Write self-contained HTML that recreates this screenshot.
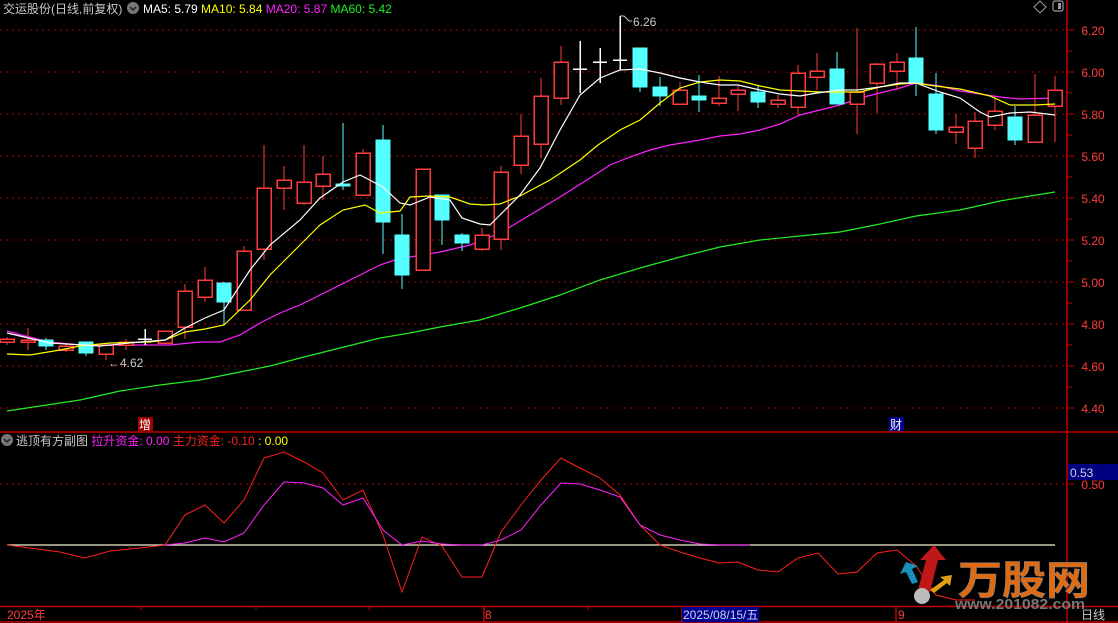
<!DOCTYPE html>
<html><head><meta charset="utf-8"><style>
html,body{margin:0;padding:0;background:#000;width:1118px;height:623px;overflow:hidden}
svg{display:block}
text{font-family:"Liberation Sans","Noto Sans CJK SC",sans-serif}
.r{fill:#000;stroke:#ff3c3c;stroke-width:1.5}
.rw{stroke:#ff3c3c;stroke-width:1.2}
.c{fill:#54ffff;stroke:#54ffff}
.cw{stroke:#54ffff;stroke-width:1.2}
.w{stroke:#fff;stroke-width:1.5}
.g{stroke:#a00;stroke-dasharray:2 4;stroke-width:1}
</style></head><body>
<svg width="1118" height="623" viewBox="0 0 1118 623" xmlns="http://www.w3.org/2000/svg">
<g class="g">
<line x1="0" y1="30" x2="1067" y2="30"/><line x1="0" y1="72" x2="1067" y2="72"/><line x1="0" y1="114" x2="1067" y2="114"/><line x1="0" y1="156" x2="1067" y2="156"/><line x1="0" y1="198" x2="1067" y2="198"/><line x1="0" y1="240" x2="1067" y2="240"/><line x1="0" y1="282" x2="1067" y2="282"/><line x1="0" y1="324" x2="1067" y2="324"/><line x1="0" y1="366" x2="1067" y2="366"/><line x1="0" y1="408" x2="1067" y2="408"/><line x1="0" y1="484" x2="1067" y2="484"/>
</g>
<g stroke="#c00000" stroke-width="1.5" fill="none">
<line x1="1067" y1="0" x2="1067" y2="623"/>
<line x1="0" y1="432" x2="1118" y2="432"/>
<line x1="0" y1="606.5" x2="1118" y2="606.5"/>
<line x1="0" y1="622" x2="1118" y2="622"/>
<line x1="484" y1="606" x2="484" y2="622"/>
<line x1="682" y1="606" x2="682" y2="622"/>
<line x1="896" y1="606" x2="896" y2="622"/>
</g>
<g stroke="#c00000" stroke-width="1">
<line x1="1067" y1="51" x2="1072" y2="51"/><line x1="1067" y1="93" x2="1072" y2="93"/><line x1="1067" y1="135" x2="1072" y2="135"/><line x1="1067" y1="177" x2="1072" y2="177"/><line x1="1067" y1="219" x2="1072" y2="219"/><line x1="1067" y1="261" x2="1072" y2="261"/><line x1="1067" y1="303" x2="1072" y2="303"/><line x1="1067" y1="345" x2="1072" y2="345"/><line x1="1067" y1="387" x2="1072" y2="387"/>
<line x1="1067" y1="30" x2="1074" y2="30"/><line x1="1067" y1="72" x2="1074" y2="72"/><line x1="1067" y1="114" x2="1074" y2="114"/><line x1="1067" y1="156" x2="1074" y2="156"/><line x1="1067" y1="198" x2="1074" y2="198"/><line x1="1067" y1="240" x2="1074" y2="240"/><line x1="1067" y1="282" x2="1074" y2="282"/><line x1="1067" y1="324" x2="1074" y2="324"/><line x1="1067" y1="366" x2="1074" y2="366"/><line x1="1067" y1="408" x2="1074" y2="408"/><line x1="1067" y1="484" x2="1074" y2="484"/>
<line x1="141" y1="606" x2="141" y2="610"/><line x1="256" y1="606" x2="256" y2="610"/><line x1="369" y1="606" x2="369" y2="610"/><line x1="588" y1="606" x2="588" y2="610"/>
</g>
<g fill="#ff3c3c" font-size="12" text-anchor="middle">
<text x="1093" y="35">6.20</text><text x="1093" y="77">6.00</text><text x="1093" y="119">5.80</text><text x="1093" y="161">5.60</text><text x="1093" y="203">5.40</text><text x="1093" y="245">5.20</text><text x="1093" y="287">5.00</text><text x="1093" y="329">4.80</text><text x="1093" y="371">4.60</text><text x="1093" y="413">4.40</text><text x="1093" y="489">0.50</text>
</g>
<rect x="1068" y="464" width="50" height="16" fill="#000080"/>
<text x="1070" y="477" fill="#d0d0e0" font-size="12">0.53</text>

<polyline fill="none" stroke="#22ee22" stroke-width="1.2" points="7,411 40,406 80,400 120,391 160,385 200,380 240,372 270,366 300,358 340,348 380,338 410,333 440,327 480,320 520,308 560,295 600,280 640,268 680,257 720,247 760,240 800,236 840,232 880,224 916,216 960,210 1000,201 1030,196 1055,192"/>
<polyline fill="none" stroke="#ff22ff" stroke-width="1.2" points="7,331 25,336 50,342 80,345 110,345 150,345 170,345 200,342 220,342 240,335 260,323 280,313 300,305 320,295 340,285 360,275 380,265 395,260 410,257 440,252 470,245 500,233 530,215 560,197 590,178 610,165 630,157 650,150 670,145 700,140 720,136 740,134 760,130 780,124 800,115 820,110 840,105 860,98 880,93 900,88 916,83 940,86 960,91 980,94 1000,97 1020,99 1055,98"/>

<g shape-rendering="crispEdges">
<line class="rw" x1="7" y1="337" x2="7" y2="345"/><rect class="r" x="0" y="339" width="14" height="3"/>
<line class="rw" x1="28" y1="328" x2="28" y2="350"/><rect class="r" x="21" y="340" width="14" height="2"/>
<line class="cw" x1="46" y1="338" x2="46" y2="350"/><rect class="c" x="39" y="340" width="14" height="6"/>
<line class="rw" x1="66" y1="343" x2="66" y2="352"/><rect class="r" x="59" y="346" width="14" height="4"/>
<line class="cw" x1="86" y1="342" x2="86" y2="356"/><rect class="c" x="79" y="342" width="14" height="11"/>
<line class="rw" x1="106" y1="343" x2="106" y2="360"/><rect class="r" x="99" y="345" width="14" height="9"/>
<line class="rw" x1="126" y1="339" x2="126" y2="350"/><rect class="r" x="119" y="342" width="14" height="3"/>
<line class="w" x1="145" y1="329" x2="145" y2="345"/><line class="w" x1="138" y1="339" x2="152" y2="339"/>
<line class="rw" x1="165" y1="331" x2="165" y2="343"/><rect class="r" x="158" y="331" width="14" height="12"/>
<line class="rw" x1="185" y1="284" x2="185" y2="339"/><rect class="r" x="178" y="291" width="14" height="36"/>
<line class="rw" x1="205" y1="267" x2="205" y2="302"/><rect class="r" x="198" y="280" width="14" height="17"/>
<line class="cw" x1="224" y1="282" x2="224" y2="325"/><rect class="c" x="217" y="283" width="14" height="19"/>
<line class="rw" x1="244" y1="246" x2="244" y2="310"/><rect class="r" x="237" y="251" width="14" height="59"/>
<line class="rw" x1="264" y1="145" x2="264" y2="260"/><rect class="r" x="257" y="188" width="14" height="61"/>
<line class="rw" x1="284" y1="166" x2="284" y2="210"/><rect class="r" x="277" y="180" width="14" height="8"/>
<line class="rw" x1="304" y1="145" x2="304" y2="205"/><rect class="r" x="297" y="182" width="14" height="21"/>
<line class="rw" x1="323" y1="156" x2="323" y2="200"/><rect class="r" x="316" y="174" width="14" height="12"/>
<line class="cw" x1="343" y1="123" x2="343" y2="190"/><rect class="c" x="336" y="184" width="14" height="2"/>
<line class="rw" x1="363" y1="149" x2="363" y2="195"/><rect class="r" x="356" y="153" width="14" height="42"/>
<line class="cw" x1="383" y1="125" x2="383" y2="254"/><rect class="c" x="376" y="140" width="14" height="82"/>
<line class="cw" x1="402" y1="214" x2="402" y2="289"/><rect class="c" x="395" y="235" width="14" height="40"/>
<line class="rw" x1="423" y1="169" x2="423" y2="270"/><rect class="r" x="416" y="169" width="14" height="101"/>
<line class="cw" x1="442" y1="195" x2="442" y2="245"/><rect class="c" x="435" y="195" width="14" height="25"/>
<line class="cw" x1="462" y1="233" x2="462" y2="251"/><rect class="c" x="455" y="235" width="14" height="8"/>
<line class="rw" x1="482" y1="228" x2="482" y2="251"/><rect class="r" x="475" y="235" width="14" height="14"/>
<line class="rw" x1="501" y1="166" x2="501" y2="250"/><rect class="r" x="494" y="172" width="14" height="67"/>
<line class="rw" x1="521" y1="114" x2="521" y2="174"/><rect class="r" x="514" y="136" width="14" height="29"/>
<line class="rw" x1="541" y1="78" x2="541" y2="158"/><rect class="r" x="534" y="96" width="14" height="48"/>
<line class="rw" x1="561" y1="46" x2="561" y2="105"/><rect class="r" x="554" y="62" width="14" height="36"/>
<line class="w" x1="580" y1="41" x2="580" y2="93"/><line class="w" x1="573" y1="69" x2="587" y2="69"/>
<line class="w" x1="600" y1="48" x2="600" y2="83"/><line class="w" x1="593" y1="62" x2="607" y2="62"/>
<line class="w" x1="620" y1="16" x2="620" y2="70"/><line class="w" x1="613" y1="60" x2="627" y2="60"/>
<line class="cw" x1="640" y1="48" x2="640" y2="92"/><rect class="c" x="633" y="48" width="14" height="39"/>
<line class="cw" x1="660" y1="77" x2="660" y2="106"/><rect class="c" x="653" y="87" width="14" height="9"/>
<line class="rw" x1="680" y1="82" x2="680" y2="104"/><rect class="r" x="673" y="90" width="14" height="14"/>
<line class="cw" x1="699" y1="75" x2="699" y2="112"/><rect class="c" x="692" y="96" width="14" height="4"/>
<line class="rw" x1="719" y1="76" x2="719" y2="106"/><rect class="r" x="712" y="98" width="14" height="5"/>
<line class="rw" x1="738" y1="86" x2="738" y2="111"/><rect class="r" x="731" y="90" width="14" height="4"/>
<line class="cw" x1="758" y1="86" x2="758" y2="108"/><rect class="c" x="751" y="92" width="14" height="10"/>
<line class="rw" x1="778" y1="95" x2="778" y2="108"/><rect class="r" x="771" y="100" width="14" height="4"/>
<line class="rw" x1="798" y1="65" x2="798" y2="115"/><rect class="r" x="791" y="73" width="14" height="34"/>
<line class="rw" x1="817" y1="53" x2="817" y2="90"/><rect class="r" x="810" y="71" width="14" height="6"/>
<line class="cw" x1="837" y1="52" x2="837" y2="104"/><rect class="c" x="830" y="69" width="14" height="35"/>
<line class="rw" x1="857" y1="28" x2="857" y2="134"/><rect class="r" x="850" y="92" width="14" height="12"/>
<line class="rw" x1="877" y1="63" x2="877" y2="113"/><rect class="r" x="870" y="64" width="14" height="19"/>
<line class="rw" x1="897" y1="53" x2="897" y2="90"/><rect class="r" x="890" y="62" width="14" height="9"/>
<line class="cw" x1="916" y1="27" x2="916" y2="96"/><rect class="c" x="909" y="58" width="14" height="25"/>
<line class="cw" x1="936" y1="73" x2="936" y2="134"/><rect class="c" x="929" y="94" width="14" height="36"/>
<line class="rw" x1="956" y1="114" x2="956" y2="144"/><rect class="r" x="949" y="127" width="14" height="5"/>
<line class="rw" x1="975" y1="112" x2="975" y2="158"/><rect class="r" x="968" y="121" width="14" height="27"/>
<line class="rw" x1="995" y1="96" x2="995" y2="130"/><rect class="r" x="988" y="111" width="14" height="14"/>
<line class="cw" x1="1015" y1="106" x2="1015" y2="145"/><rect class="c" x="1008" y="117" width="14" height="23"/>
<line class="rw" x1="1035" y1="74" x2="1035" y2="142"/><rect class="r" x="1028" y="115" width="14" height="27"/>
<line class="rw" x1="1055" y1="76" x2="1055" y2="142"/><rect class="r" x="1048" y="90" width="14" height="16"/>
</g>
<polyline fill="none" stroke="#ffff00" stroke-width="1.2" points="7,354 30,355 60,350 80,346 110,343 150,342 165,340 185,332 205,329 224,325 250,300 270,275 290,255 305,240 320,225 343,210 365,205 380,213 400,211 410,197 430,196 450,197 470,204 485,205 500,204 520,196 550,180 580,160 598,145 620,130 640,120 660,103 680,88 700,82 720,80 740,81 760,86 780,90 800,91 820,92 840,92 860,92 880,87 900,84 916,83 935,86 960,89 990,96 1010,105 1035,105 1055,104"/>
<polyline fill="none" stroke="#ffffff" stroke-width="1.2" points="7,333 50,343 100,346 140,342 165,340 185,328 205,318 224,310 250,270 270,245 300,220 320,198 343,182 360,175 383,187 400,203 410,205 430,197 450,200 462,218 480,224 490,225 500,215 520,195 540,168 560,130 580,95 600,78 620,70 640,69 660,73 680,78 700,82 720,85 738,85 760,90 780,94 800,96 817,93 840,90 857,90 880,87 900,83 916,83 940,92 960,98 980,112 990,117 1010,113 1030,112 1055,115"/>
<text x="108" y="367" fill="#c8c8c8" font-size="12">←4.62</text>
<polyline points="620,16 624,16 629,21 632,21" fill="none" stroke="#c8c8c8" stroke-width="1"/>
<text x="633" y="26" fill="#c8c8c8" font-size="12">6.26</text>

<rect x="138" y="417" width="15" height="14" fill="#a00000"/><text x="139" y="429" fill="#fff" font-size="12">增</text>
<rect x="889" y="417" width="15" height="14" fill="#000090"/><text x="890" y="429" fill="#fff" font-size="12">财</text>

<line x1="7" y1="545" x2="1055" y2="545" stroke="#f0f0d0" stroke-width="1.2"/>
<polyline fill="none" stroke="#ff2020" stroke-width="1" points="7,545 30,548 60,552 85,558 110,551 140,548 165,545 185,515 205,505 224,523 244,500 264,458 284,452 304,462 323,473 343,500 363,490 383,535 402,592 422,537 442,546 462,577 482,577 501,532 521,505 541,480 561,458 580,468 600,478 620,495 640,525 660,545 680,552 700,558 719,563 738,562 758,570 778,572 798,558 818,553 838,574 857,572 877,553 897,550 916,566 936,595 956,600 975,600"/>
<polyline fill="none" stroke="#ff22ff" stroke-width="1" points="165,545 185,543 205,538 224,542 244,533 264,505 284,482 304,483 323,488 343,505 363,498 383,530 402,545 422,541 442,544 462,545 482,545 501,540 521,530 541,505 561,483 580,484 600,490 620,497 640,525 660,535 680,540 700,544 720,545 750,545"/>

<polygon points="918,590 926,560 920,560 934,545 946,560 938,560 930,592" fill="#c01818"/>
<polygon points="912,584 906,572 900,574 906,562 918,566 912,569 918,582" fill="#1890b8"/>
<polygon points="930,590 944,580 940,577 952,575 950,586 947,583 934,593" fill="#e0a010"/>
<circle cx="922" cy="596" r="8" fill="#bbb"/>
<text x="958" y="594" fill="#e06a10" stroke="#888" stroke-width="0.6" font-size="40" font-weight="bold" font-family="'Noto Sans CJK SC',sans-serif" textLength="132" lengthAdjust="spacingAndGlyphs">万股网</text>
<text x="955" y="609" fill="#777" font-size="15" font-weight="bold" textLength="130" lengthAdjust="spacingAndGlyphs">www.201082.com</text>

<text x="3" y="13" fill="#c8c8c8" font-size="12">交运股份(日线,前复权)</text>
<circle cx="133" cy="8" r="6" fill="#777"/><path d="M130,7 L133,10 L136,7" stroke="#222" stroke-width="1.5" fill="none"/>
<text x="143" y="13" font-size="12"><tspan fill="#fff">MA5: 5.79 </tspan><tspan fill="#ffff00"> MA10: 5.84 </tspan><tspan fill="#ff22ff"> MA20: 5.87 </tspan><tspan fill="#22ee22"> MA60: 5.42</tspan></text>
<path d="M1040,0 L1046,6 L1040,12 L1034,6 Z" transform="translate(0,1)" fill="none" stroke="#999"/>
<rect x="1053" y="1" width="10" height="10" rx="2" fill="none" stroke="#999" stroke-width="1.2"/><rect x="1058" y="3" width="3" height="6" fill="#999"/>

<circle cx="7" cy="440" r="6" fill="#777"/><path d="M4,439 L7,442 L10,439" stroke="#222" stroke-width="1.5" fill="none"/>
<text x="16" y="445" font-size="12"><tspan fill="#c8c8c8">逃顶有方副图 </tspan><tspan fill="#ff22ff">拉升资金: 0.00 </tspan><tspan fill="#ff2020">主力资金: -0.10 </tspan><tspan fill="#ffff00">: 0.00</tspan></text>

<text x="7" y="619" fill="#ff3c3c" font-size="12">2025年</text>
<text x="485" y="619" fill="#ff3c3c" font-size="12">8</text>
<rect x="682" y="607" width="77" height="15" fill="#000090"/>
<text x="683" y="619" fill="#d0d0e0" font-size="12">2025/08/15/五</text>
<text x="898" y="619" fill="#ff3c3c" font-size="12">9</text>
<text x="1081" y="619" fill="#c8c8c8" font-size="12">日线</text>
</svg>
</body></html>
